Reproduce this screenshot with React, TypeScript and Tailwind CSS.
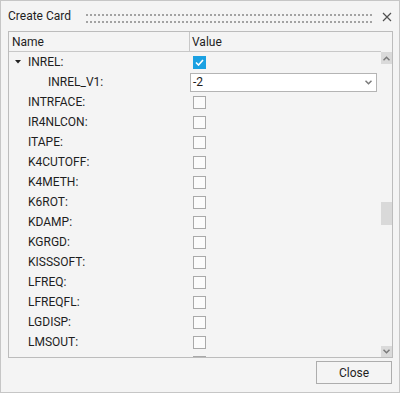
import React from 'react';

const rows = [
  'INTRFACE:',
  'IR4NLCON:',
  'ITAPE:',
  'K4CUTOFF:',
  'K4METH:',
  'K6ROT:',
  'KDAMP:',
  'KGRGD:',
  'KISSSOFT:',
  'LFREQ:',
  'LFREQFL:',
  'LGDISP:',
  'LMSOUT:',
];

function Box({ checked = false }: { checked?: boolean }) {
  if (checked) {
    return (
      <div className="w-[13px] h-[13px] bg-[#1ba1e2] flex items-center justify-center">
        <svg width="9" height="7" viewBox="0 0 9 7">
          <path d="M1 3.5 L3.5 6 L8 1" fill="none" stroke="#fff" strokeWidth="1.6" />
        </svg>
      </div>
    );
  }
  return <div className="w-[13px] h-[13px] border border-[#a9a9a9] bg-[#fbfbfb]" />;
}

function Chevron({ up = false }: { up?: boolean }) {
  return (
    <svg width="7" height="5" viewBox="0 0 7 5" className={up ? 'rotate-180' : ''}>
      <path d="M0.5 0.8 L3.5 3.8 L6.5 0.8" fill="none" stroke="#7a7a7a" strokeWidth="1.5" />
    </svg>
  );
}

export default function App() {
  return (
    <div
      className="w-[400px] h-[393px] border border-[#c6c6c6] bg-[#f4f4f4] flex flex-col text-[12px] text-[#1e1e1e]"
      style={{ fontFamily: 'Roboto, "Liberation Sans", sans-serif' }}
    >
      {/* title bar */}
      <div className="h-[30px] flex items-center pl-[7px] pr-[7px] shrink-0">
        <span className="leading-none">Create Card</span>
        <svg className="ml-[15px] flex-1 h-[9px] self-start mt-[13px]" height="9">
          <defs>
            <pattern id="grip" width="4" height="7" patternUnits="userSpaceOnUse">
              <rect x="0" y="0" width="2" height="2" fill="#a3a3a3" />
            </pattern>
          </defs>
          <rect x="0" y="0" width="286" height="9" fill="url(#grip)" />
        </svg>
        <svg width="10" height="10" viewBox="0 0 10 10" className="ml-[8px] mt-[1px]">
          <path d="M1 1 L9 9 M9 1 L1 9" stroke="#505050" strokeWidth="1.2" />
        </svg>
      </div>

      {/* table panel */}
      <div className="ml-[7px] mr-[6px] h-[327px] border border-[#bcbcbc] flex flex-col shrink-0">
        <div className="h-[20px] shrink-0 flex border-b border-[#c8c8c8] mr-[11px]">
          <div className="w-[181px] border-r border-[#c8c8c8] pl-[3px] flex items-center">Name</div>
          <div className="pl-[2px] flex items-center">Value</div>
        </div>
        <div className="flex flex-1 min-h-0">
          <div className="flex-1 overflow-hidden">
            <div className="h-[20px] flex items-center">
              <div className="w-[182px] flex items-center pl-[6px]">
                <svg width="6" height="4" viewBox="0 0 6 4" className="mr-[7px]">
                  <path d="M0 0 L6 0 L3 3.5 Z" fill="#222" />
                </svg>
                <span>INREL:</span>
              </div>
              <div className="pl-[2px]">
                <Box checked />
              </div>
            </div>
            <div className="h-[20px] flex items-center">
              <div className="w-[181px] pl-[39px]">INREL_V1:</div>
              <div className="w-[187px] h-[19px] border border-[#b4b4b4] bg-white flex items-center justify-between pl-[2px] pr-[4px]">
                <span>-2</span>
                <Chevron />
              </div>
            </div>
            {rows.map((r) => (
              <div key={r} className="h-[20px] flex items-center shrink-0">
                <div className="w-[182px] pl-[19px]">{r}</div>
                <div className="pl-[2px]">
                  <Box />
                </div>
              </div>
            ))}
            <div className="h-[20px] flex items-center shrink-0">
              <div className="w-[182px]" />
              <div className="pl-[2px]">
                <Box />
              </div>
            </div>
          </div>
          <div className="w-[11px] flex flex-col shrink-0">
            <div className="h-[12px] bg-[#dadada] flex items-center justify-center">
              <Chevron up />
            </div>
            <div className="flex-1 flex flex-col">
              <div className="h-[138px]" />
              <div className="h-[23px] bg-[#d9d9d9]" />
            </div>
            <div className="h-[11px] bg-[#dadada] flex items-center justify-center">
              <Chevron />
            </div>
          </div>
        </div>
      </div>

      {/* footer */}
      <div className="flex justify-end pr-[7px] pt-[3px]">
        <button className="w-[76px] h-[23px] border border-[#adadad] bg-[#f4f4f4] text-[12px] text-[#1e1e1e]">
          Close
        </button>
      </div>
    </div>
  );
}
